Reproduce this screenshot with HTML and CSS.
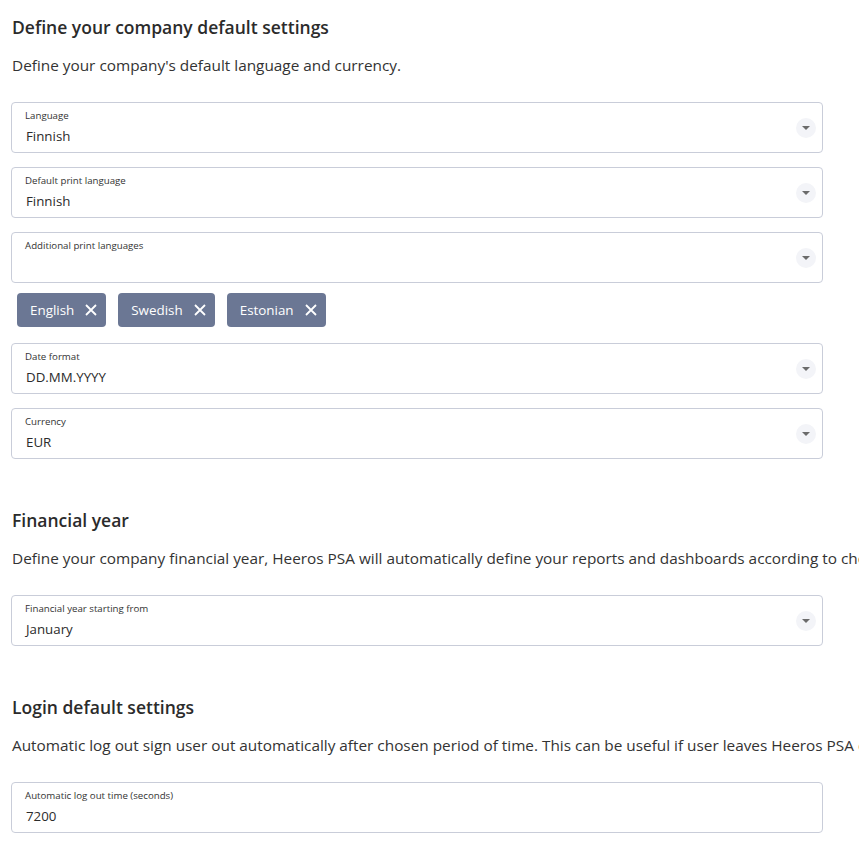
FILE: index.html
```html
<!DOCTYPE html>
<html lang="en">
<head>
    <meta charset="UTF-8">
    <meta name="viewport" content="width=device-width, initial-scale=1.0">
    <title>Company settings</title>
    <link rel="stylesheet" href="styles.css">
</head>
<body>
    <main class="settings">
        <section class="block">
            <h2 class="block-title">Define your company default settings</h2>
            <p class="block-desc">Define your company's default language and currency.</p>
            <div class="fields">
                <div class="field">
                    <div class="field-body">
                        <span class="field-label">Language</span>
                        <span class="field-value">Finnish</span>
                    </div>
                    <span class="field-toggle"><svg width="8" height="4" viewBox="0 0 8 4"><path d="M0 0h8L4 4z" fill="#6b6b6b"/></svg></span>
                </div>
                <div class="field">
                    <div class="field-body">
                        <span class="field-label">Default print language</span>
                        <span class="field-value">Finnish</span>
                    </div>
                    <span class="field-toggle"><svg width="8" height="4" viewBox="0 0 8 4"><path d="M0 0h8L4 4z" fill="#6b6b6b"/></svg></span>
                </div>
                <div class="field-group">
                    <div class="field">
                        <div class="field-body">
                            <span class="field-label">Additional print languages</span>
                            <span class="field-value"></span>
                        </div>
                        <span class="field-toggle"><svg width="8" height="4" viewBox="0 0 8 4"><path d="M0 0h8L4 4z" fill="#6b6b6b"/></svg></span>
                    </div>
                    <div class="chips">
                        <span class="chip">English <svg class="chip-x" width="12" height="12" viewBox="0 0 12 12"><path d="M1 1l10 10M11 1L1 11" stroke="#fff" stroke-width="1.8"/></svg></span>
                        <span class="chip">Swedish <svg class="chip-x" width="12" height="12" viewBox="0 0 12 12"><path d="M1 1l10 10M11 1L1 11" stroke="#fff" stroke-width="1.8"/></svg></span>
                        <span class="chip">Estonian <svg class="chip-x" width="12" height="12" viewBox="0 0 12 12"><path d="M1 1l10 10M11 1L1 11" stroke="#fff" stroke-width="1.8"/></svg></span>
                    </div>
                </div>
                <div class="field">
                    <div class="field-body">
                        <span class="field-label">Date format</span>
                        <span class="field-value">DD.MM.YYYY</span>
                    </div>
                    <span class="field-toggle"><svg width="8" height="4" viewBox="0 0 8 4"><path d="M0 0h8L4 4z" fill="#6b6b6b"/></svg></span>
                </div>
                <div class="field">
                    <div class="field-body">
                        <span class="field-label">Currency</span>
                        <span class="field-value">EUR</span>
                    </div>
                    <span class="field-toggle"><svg width="8" height="4" viewBox="0 0 8 4"><path d="M0 0h8L4 4z" fill="#6b6b6b"/></svg></span>
                </div>
            </div>
        </section>

        <section class="block">
            <h2 class="block-title">Financial year</h2>
            <p class="block-desc">Define your company financial year, Heeros PSA will automatically define your reports and dashboards according to chosen financial year.</p>
            <div class="fields">
                <div class="field">
                    <div class="field-body">
                        <span class="field-label">Financial year starting from</span>
                        <span class="field-value">January</span>
                    </div>
                    <span class="field-toggle"><svg width="8" height="4" viewBox="0 0 8 4"><path d="M0 0h8L4 4z" fill="#6b6b6b"/></svg></span>
                </div>
            </div>
        </section>

        <section class="block">
            <h2 class="block-title">Login default settings</h2>
            <p class="block-desc">Automatic log out sign user out automatically after chosen period of time. This can be useful if user leaves Heeros PSA open on a shared computer.</p>
            <div class="fields">
                <div class="field">
                    <div class="field-body">
                        <span class="field-label">Automatic log out time (seconds)</span>
                        <span class="field-value">7200</span>
                    </div>
                </div>
            </div>
        </section>
    </main>
</body>
</html>
```

FILE: styles.css
```css
/* Reset */
* {
    margin: 0;
    padding: 0;
    box-sizing: border-box;
    font-family: 'Open Sans', 'Noto Sans', sans-serif;
}

body {
    background: #fff;
    color: #2e2e2e;
    overflow: hidden;
}

.settings {
    width: 823px;
    padding: 15px 0 0 11px;
}

.block + .block {
    margin-top: 49px;
}

.block-title {
    font-size: 17.5px;
    font-weight: 600;
    line-height: 24px;
    padding-left: 1px;
    color: #2b2b2b;
}

.block-desc {
    margin-top: 15px;
    font-size: 15.35px;
    line-height: 22px;
    padding-left: 1px;
    white-space: nowrap;
    color: #333;
}

.fields {
    margin-top: 26px;
    display: flex;
    flex-direction: column;
    gap: 14px;
}

.field {
    display: flex;
    align-items: center;
    height: 51px;
    border: 1px solid #c9cdd9;
    border-radius: 4px;
    padding: 0 6px 0 13px;
    background: #fff;
}

.field-body {
    flex: 1;
    display: flex;
    flex-direction: column;
    gap: 4px;
}

.field-label {
    font-size: 9.7px;
    line-height: 12px;
    color: #333;
}

.field-value {
    font-size: 13.3px;
    line-height: 20px;
    height: 20px;
    padding-left: 1px;
    color: #2b2b2b;
}

.field-toggle {
    display: flex;
    align-items: center;
    justify-content: center;
    width: 20px;
    height: 20px;
    border-radius: 50%;
    background: #f3f4f8;
}

.field-group {
    display: flex;
    flex-direction: column;
    gap: 10px;
}

.chips {
    display: flex;
    gap: 12px;
    padding: 0 0 2px 6px;
}

.chip {
    display: inline-flex;
    align-items: center;
    gap: 11px;
    height: 34px;
    padding: 0 9px 0 13px;
    border-radius: 4px;
    background: #6b7794;
    color: #fff;
    font-size: 13.4px;
}
```
